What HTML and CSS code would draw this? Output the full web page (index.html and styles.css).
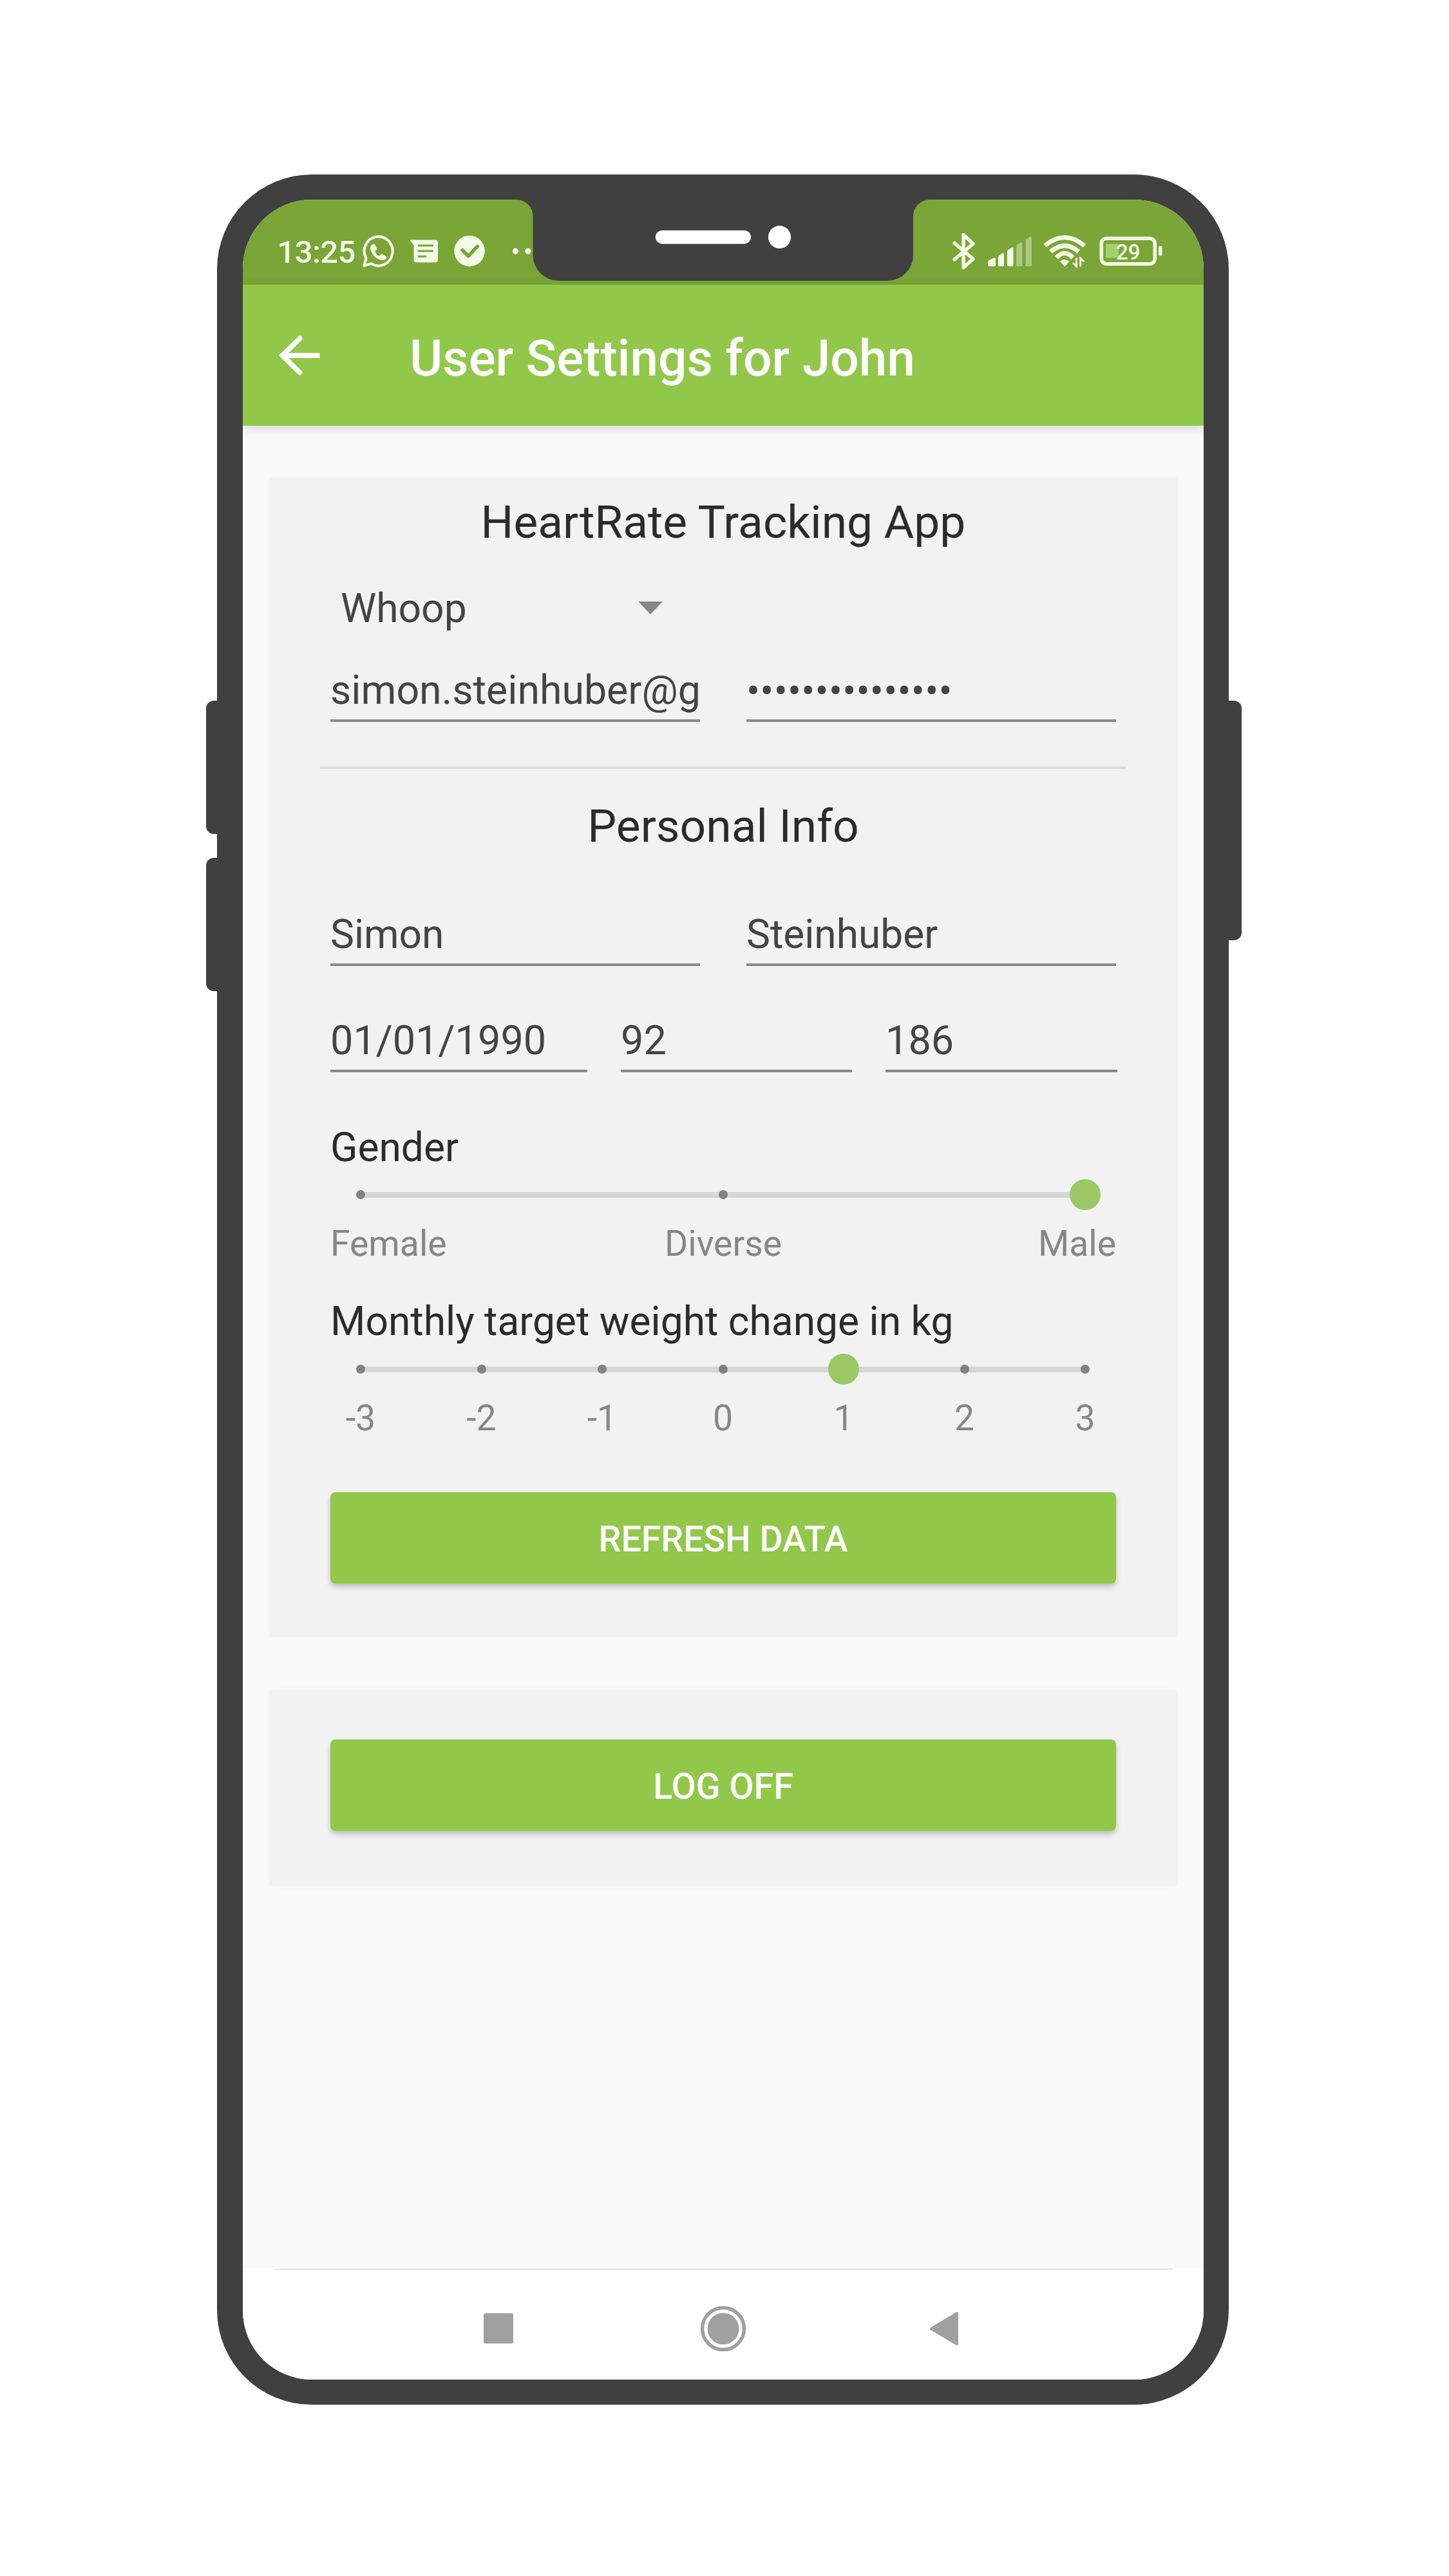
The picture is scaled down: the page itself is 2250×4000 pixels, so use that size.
FILE: index.html
```html
<!DOCTYPE html>
<html lang="en">
<head>
<meta charset="utf-8">
<title>User Settings</title>
<link rel="stylesheet" href="styles.css">
</head>
<body>
<div class="phone">
  <span class="key key-up"></span>
  <span class="key key-down"></span>
  <span class="key key-power"></span>
  <div class="screen">
    <header class="status">
      <div class="status-side">
        <span class="clock">13:25</span>
        <svg class="ico-whatsapp" viewBox="561 363 54 54" fill="none" stroke="#f3fbe6">
          <path d="M565.3 412.5 L568.7 401.5 A22 22.6 0 1 1 576.5 409.5 Z" stroke-width="4.2" stroke-linejoin="round"/>
          <path d="M579.5 379.2 c-3.6 1-5.2 4.4-4.2 8.2 2.6 9.200 9.400 15.200 17.700 16.700 4 .6 7-1.400 7.300-5.300 l-7.200-4.800 -4.200 3.400 c-3-1.300-5.300-3.700-6.600-7.200 l3.100-3.500 -3.200-7.100z" fill="#f3fbe6" stroke="none"/>
        </svg>
        <svg class="ico-message" viewBox="635 370 48 40">
          <path d="M636.5 372.500 H676 a4 4 0 0 1 4 4 V403.500 a4 4 0 0 1 -4 4 H646.500 a4 4 0 0 1 -4-4 V381z" fill="#f3fbe6"/>
          <path d="M649 381.300h24M649 389.800h24M649 398.300h13" stroke="#7aa537" stroke-width="3"/>
        </svg>
        <svg class="ico-check" viewBox="703 363 52 54" fill="none">
          <ellipse cx="729" cy="389.700" rx="23.800" ry="24" fill="#f3fbe6"/>
          <path d="M718 388.500l9.300 9.200 14-15" stroke="#7aa537" stroke-width="5.500" stroke-linecap="round" stroke-linejoin="round"/>
        </svg>
        <svg class="ico-more" viewBox="793 380 34 20" fill="#f3fbe6">
          <circle cx="800.400" cy="390" r="4.700"/><circle cx="819.800" cy="390" r="4.700"/>
        </svg>
      </div>
      <div class="status-side">
        <svg class="ico-bluetooth" viewBox="1477 360 40 60" fill="none" stroke="#f3fbe6" stroke-width="5.500" stroke-linecap="round" stroke-linejoin="round">
          <path d="M1482 377.500l29 24.500-15 13.500v-51l15 14-29 24.500"/>
        </svg>
        <svg class="ico-signal" viewBox="1532 365 72 50" fill="#f3fbe6">
          <path d="M1534 407q0-2 2-3l8-4q2-.5 2 2v9q0 2.500-2.500 2.500h-7q-2.500 0-2.500-2.500z"/>
          <path d="M1550 399q0-2 2-3l5-3q2-.7 2 1.500v16.500q0 2.500-2.500 2.500h-4q-2.500 0-2.500-2.500z"/>
          <path d="M1564 390.500q0-2 2-3l5.500-3q2-.7 2 1.500v25q0 2.500-2.500 2.500h-4.500q-2.500 0-2.500-2.500z"/>
          <path d="M1578.300 382q0-2 2-3l5.200-3q2-.7 2 1.500v33.500q0 2.500-2.500 2.500h-4.200q-2.500 0-2.500-2.500z" opacity=".42"/>
          <path d="M1592.500 373.500q0-2 2-3l5.500-3q2-.7 2 1.500v42q0 2.500-2.500 2.500h-4.500q-2.500 0-2.500-2.500z" opacity=".42"/>
        </svg>
        <svg class="ico-wifi" viewBox="1618 363 72 56" fill="none" stroke="#f3fbe6" stroke-width="7">
          <path d="M1622.500 382.500Q1653.200 357 1684 382.500"/>
          <path d="M1631.500 392Q1653.200 373 1675 392"/>
          <path d="M1640.500 401Q1653.200 387.500 1666 401"/>
          <path d="M1646 407q7.200-6 14.400 0l-7.200 8z" fill="#f3fbe6" stroke="none"/>
          <path d="M1671.500 401.500v13l-5.500-5.500M1677.700 415v-13l5.500 5.500" stroke-width="3"/>
        </svg>
        <span class="battery">
          <svg class="ico-battery" viewBox="1705 365 102 50" fill="none">
            <rect x="1717" y="378.500" width="20" height="22" rx="1" fill="#a6d069"/>
            <rect x="1710.300" y="370.300" width="83" height="39.500" rx="7.500" stroke="#f3fbe6" stroke-width="5.600"/>
            <rect x="1799" y="382" width="5.500" height="15" rx="2" fill="#f3fbe6"/>
          </svg>
          <span class="level">29</span>
        </span>
      </div>
    </header>

    <div class="appbar">
      <svg class="ico-back" viewBox="430 518 70 68" fill="none" stroke="#fff" stroke-width="8">
        <path d="M465.500 525.500L438.500 552l27 26.500" stroke-linecap="round"/>
        <path d="M439 552h57.500"/>
      </svg>
      <h1>User Settings for John</h1>
    </div>

    <main>
      <section class="card settings">
        <h2>HeartRate Tracking App</h2>
        <div class="select">
          <span>Whoop</span>
          <svg class="ico-caret" viewBox="0 0 38 20"><path d="M0 0h38L19 20z" fill="#868686"/></svg>
        </div>
        <div class="row two account">
          <div class="field">simon.steinhuber@g</div>
          <div class="field password">•••••••••••••••</div>
        </div>
        <hr>
        <h2 class="personal">Personal Info</h2>
        <div class="row two names">
          <div class="field">Simon</div>
          <div class="field">Steinhuber</div>
        </div>
        <div class="row three">
          <div class="field">01/01/1990</div>
          <div class="field">92</div>
          <div class="field">186</div>
        </div>

        <div class="label gender">Gender</div>
        <div class="slider">
          <i class="tick"></i><i class="tick"></i><i class="thumb"></i>
        </div>
        <div class="choices"><span>Female</span><span>Diverse</span><span>Male</span></div>

        <div class="label weight">Monthly target weight change in kg</div>
        <div class="slider">
          <i class="tick"></i><i class="tick"></i><i class="tick"></i><i class="tick"></i><i class="thumb"></i><i class="tick"></i><i class="tick"></i>
        </div>
        <div class="scale"><span>-3</span><span>-2</span><span>-1</span><span>0</span><span>1</span><span>2</span><span>3</span></div>

        <div class="button">REFRESH DATA</div>
      </section>

      <section class="card session">
        <div class="button">LOG OFF</div>
      </section>
    </main>

    <nav>
      <svg class="ico-recent" viewBox="0 0 46 47"><rect width="46" height="47" rx="3" fill="#a0a0a0"/></svg>
      <svg class="ico-home" viewBox="0 0 72 72"><circle cx="36" cy="36" r="32.500" fill="none" stroke="#a0a0a0" stroke-width="5.500"/><circle cx="36" cy="36" r="24.500" fill="#a0a0a0"/></svg>
      <svg class="ico-prev" viewBox="0 0 46 54"><path d="M3 27L43 3V51z" fill="#a0a0a0" stroke="#a0a0a0" stroke-width="4" stroke-linejoin="round"/></svg>
    </nav>
  </div>

  <svg class="notch" viewBox="0 0 642 126">
    <path d="M0 0A25.500 25.500 0 0 1 25.500 25.500V86A40 40 0 0 0 65.500 126H576A40 40 0 0 0 616 86V25.500A25.500 25.500 0 0 1 641.500 0z" fill="#404040"/>
    <rect x="215.700" y="47.700" width="148.500" height="21" rx="10.500" fill="#fff"/>
    <circle cx="408.500" cy="58.200" r="17.600" fill="#fff"/>
  </svg>
</div>
</body>
</html>
```
FILE: styles.css
```css
* { box-sizing: border-box; }

body {
  margin: 0;
  background: #fff;
  font-family: Roboto, "Open Sans", sans-serif;
  color: #2b2b2b;
}

svg { display: block; flex: none; }

/* Phone body */
.phone {
  position: relative;
  width: 1571px;
  height: 3463px;
  margin: 271px 0 0 337px;
  padding: 39px 39px 39px 40px;
  background: #404040;
  border-radius: 147px;
}

.key {
  position: absolute;
  background: #404040;
}
.key-up, .key-down {
  left: -17.5px;
  width: 20px;
  height: 207px;
  border-radius: 12px 0 0 12px;
}
.key-up { top: 817px; }
.key-down { top: 1061px; }
.key-power {
  right: -20px;
  top: 817px;
  width: 22px;
  height: 372px;
  border-radius: 0 12px 12px 0;
}

.notch {
  position: absolute;
  left: 465px;
  top: 38.5px;
  width: 642px;
  height: 126px;
}

.screen {
  display: flex;
  flex-direction: column;
  height: 100%;
  overflow: hidden;
  background: #fafafa;
  border-radius: 107px;
}

/* Status bar */
.status {
  display: flex;
  justify-content: space-between;
  flex: none;
  height: 132px;
  padding: 28px 62px 0 53.5px;
  background: #7aa537;
  color: #f3fbe6;
}
.status-side { display: flex; align-items: center; }
.clock {
  width: 130px;
  font-size: 49px;
  font-weight: 500;
  line-height: 60px;
  letter-spacing: -.6px;
  padding-top: 3px;
}
.ico-whatsapp { width: 54px; height: 54px; }
.ico-message { width: 48px; height: 40px; margin-left: 20px; }
.ico-check { width: 52px; height: 54px; margin-left: 20px; }
.ico-more { width: 34px; height: 20px; margin-left: 38px; }
.ico-bluetooth { width: 40px; height: 60px; }
.ico-signal { width: 72px; height: 50px; margin-left: 15px; }
.ico-wifi { width: 72px; height: 56px; margin-left: 14px; }
.battery { position: relative; margin-left: 15px; }
.ico-battery { width: 102px; height: 50px; }
.level {
  position: absolute;
  left: 28px;
  top: 6px;
  font-size: 33px;
  font-weight: 500;
  line-height: 42px;
}

/* App bar */
.appbar {
  display: flex;
  flex: none;
  height: 219px;
  padding: 76px 0 0 53px;
  background: #91c849;
  color: #fff;
  box-shadow: 0 4px 16px rgba(0, 0, 0, .16);
}
.ico-back { width: 70px; height: 68px; }
h1 {
  margin: -10px 0 0 136px;
  font-size: 78.4px;
  font-weight: 500;
  line-height: 96px;
}

/* Content */
main {
  flex: 1;
  padding: 81px 41px 0 42px;
}
.card {
  background: #f2f2f2;
  box-shadow: 0 0 8px #f2f2f2;
}
.settings { padding: 26px 95px 83px 94px; }
.session { margin-top: 83px; padding: 76px 95px 85px 94px; }

h2 {
  margin: 0;
  font-size: 71.3px;
  font-weight: 400;
  line-height: 85px;
  text-align: center;
}
.select {
  display: flex;
  align-items: center;
  justify-content: space-between;
  width: 516px;
  height: 80px;
  margin-top: 51px;
  padding-left: 16px;
  color: #444;
  font-size: 62.3px;
}
.ico-caret { width: 38px; height: 20px; }

.row { display: grid; }
.two { grid-template-columns: 574px 574px; column-gap: 72px; }
.three { grid-template-columns: 399px 359px 360px; column-gap: 52px; margin-top: 76px; }
.account { margin-top: 48px; }
.names { margin-top: 86px; }
.field {
  height: 89px;
  border-bottom: 4px solid #8a8a8a;
  color: #444;
  font-size: 62.6px;
  line-height: 80px;
  white-space: nowrap;
}
.names .field { font-size: 62.2px; }
.three .field { font-size: 63px; }
.password { letter-spacing: .2px; line-height: 84px; }
hr {
  height: 4px;
  margin: 69px -15px 0 -16px;
  border: 0;
  background: #dadada;
}
.personal { margin-top: 46px; }

.label {
  font-size: 62.3px;
  line-height: 80px;
}
.gender { margin-top: 77px; }
.weight { margin-top: 50px; }

.slider {
  display: flex;
  align-items: center;
  justify-content: space-between;
  height: 48px;
  margin-top: 9px;
  padding: 0 41px 0 40px;
  background: linear-gradient(#d6d6d4, #d6d6d4) 47px center / 1126px 9px no-repeat;
}
.weight + .slider { margin-top: 10px; }
.tick {
  width: 14px;
  height: 14px;
  border-radius: 50%;
  background: #828282;
}
.thumb {
  width: 48px;
  height: 48px;
  margin: 0 -17px;
  border-radius: 50%;
  background: #9bc764;
}
.choices, .scale {
  margin-top: 23px;
  color: #868686;
  font-size: 55.3px;
  line-height: 60px;
}
.choices { display: grid; grid-template-columns: 1fr auto 1fr; }
.choices span:last-child { text-align: right; }
.scale {
  display: flex;
  justify-content: space-between;
  padding: 0 41px 0 40px;
}
.scale span {
  display: flex;
  justify-content: center;
  width: 14px;
}

.button {
  height: 142px;
  border-radius: 8px;
  background: #91c849;
  box-shadow: 0 5px 8px rgba(0, 0, 0, .22);
  color: #fff;
  font-size: 55.5px;
  font-weight: 500;
  line-height: 148px;
  text-align: center;
}
.settings .button { margin-top: 84px; }

/* System navigation */
nav {
  display: flex;
  align-items: center;
  flex: none;
  height: 173px;
  padding: 14px 0 0 374px;
  background: linear-gradient(#ebebeb, #ebebeb) 49px 0 / 1395px 3px no-repeat #fff;
}
.ico-recent { width: 46px; height: 47px; }
.ico-home { width: 72px; height: 72px; margin-left: 290px; }
.ico-prev { width: 46px; height: 54px; margin-left: 284px; }
```
